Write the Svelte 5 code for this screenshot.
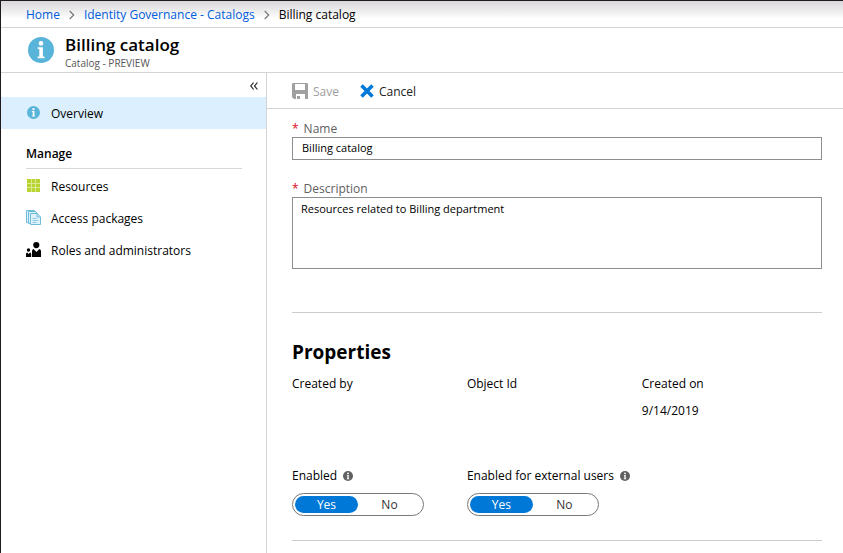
<script>
  let name = $state('Billing catalog');
  let description = $state('Resources related to Billing department');
  let toggles = $state([
    { id: 'enabled', label: 'Enabled', value: 'Yes' },
    { id: 'external', label: 'Enabled for external users', value: 'Yes' }
  ]);
  const properties = [
    { label: 'Created by', value: '' },
    { label: 'Object Id', value: '' },
    { label: 'Created on', value: '9/14/2019' }
  ];
</script>

{#snippet info(size, color)}
  <svg width={size} height={size} viewBox="0 0 26 26" aria-hidden="true">
    <circle cx="13" cy="13" r="13" fill={color} />
    <circle cx="13" cy="6.4" r="2.3" fill="#fff" />
    <path d="M9.7 10.2h5.2v9.3h1.6v1.7H9.6v-1.7h1.7v-7.6H9.7z" fill="#fff" />
  </svg>
{/snippet}

{#snippet chevron()}
  <svg class="chevron" width="6" height="10" viewBox="0 0 6 10" aria-hidden="true">
    <path d="M.7 1l4 4-4 4" fill="none" stroke="#777" stroke-width="1.2" />
  </svg>
{/snippet}

<div class="portal">
  <nav class="breadcrumb" aria-label="Breadcrumb">
    <a href="#home">Home</a>
    {@render chevron()}
    <a href="#catalogs">Identity Governance - Catalogs</a>
    {@render chevron()}
    <span>Billing catalog</span>
  </nav>

  <header>
    {@render info(26, '#59b4d9')}
    <div class="titles">
      <h1>Billing catalog</h1>
      <p>Catalog - PREVIEW</p>
    </div>
  </header>

  <div class="body">
    <aside>
      <div class="collapse">
        <button aria-label="Collapse menu">
          <svg width="8" height="8" viewBox="0 0 8 8" aria-hidden="true">
            <path d="M3.6.5L.8 4l2.8 3.5M7.4.5L4.6 4l2.8 3.5" fill="none" stroke="#222" stroke-width="1.2" />
          </svg>
        </button>
      </div>
      <a class="item active" href="#overview">
        <span class="icon">{@render info(13, '#59b4d9')}</span>
        <span class="text">Overview</span>
      </a>
      <h2>Manage</h2>
      <a class="item" href="#resources">
        <span class="icon">
          <svg width="13" height="13" viewBox="0 0 13 13" aria-hidden="true">
            <path fill="#dcea8f" d="M0 0h13v13H0z" />
            <path fill="#b8d432" d="M0 0h4v4H0zM5 0h3v4H5zM9 0h4v4H9zM0 5h4v3H0zM5 5h3v3H5zM9 5h4v3H9zM0 9h4v4H0zM5 9h3v4H5zM9 9h4v4H9z" />
          </svg>
        </span>
        <span class="text">Resources</span>
      </a>
      <a class="item" href="#packages">
        <span class="icon">
          <svg width="15" height="15" viewBox="0 0 15 15" aria-hidden="true">
            <g fill="#dff1f9" stroke="#6dbcdc">
              <path d="M.5.5h8l2 2v10H.5z" />
              <path d="M2.5 1.5h7l2 2v10h-9z" />
              <path d="M4.5 3.5h6.7l3.3 3.3v7.7h-10z" />
              <path d="M11 3.5V7h3.5" fill="none" />
              <path d="M6.5 8.5h4M6.5 10.5h6M6.5 12.500h4" fill="none" stroke-width=".7" />
            </g>
          </svg>
        </span>
        <span class="text">Access packages</span>
      </a>
      <a class="item" href="#roles">
        <span class="icon">
          <svg width="15" height="15" viewBox="0 0 15 15" aria-hidden="true">
            <circle cx="10.3" cy="3.1" r="3.1" />
            <path d="M6 15V9q0-1.600 1.600-1.900L10.500 10l2.800-2.900Q15 7.400 15 9v6z" />
            <circle cx="2.5" cy="8" r="1.7" />
            <path d="M0 15v-3q0-1.300 1.200-1.500l1.400 1.400 1.400-1.400q1.200.2 1.200 1.500v3z" />
          </svg>
        </span>
        <span class="text">Roles and administrators</span>
      </a>
    </aside>

    <main>
      <div class="toolbar">
        <button class="save" disabled>
          <svg width="16" height="16" viewBox="0 0 16 16" aria-hidden="true">
            <path fill="#a0a0a0" fill-rule="evenodd" d="M1 0h14l1 1v15h-3v-5H4v5H2l-2-2V1zM3 1v6h10V1z" />
            <path fill="#a0a0a0" d="M5 13h3v3H5z" />
          </svg>
          <span class="text">Save</span>
        </button>
        <button>
          <svg width="14" height="14" viewBox="0 0 14 14" aria-hidden="true">
            <path d="M1.5 1.500l11 11M12.500 1.500l-11 11" stroke="#0078d7" stroke-width="3.600" />
          </svg>
          <span class="text">Cancel</span>
        </button>
      </div>

      <form>
        <div class="field">
          <label for="name"><span class="required">*</span>Name</label>
          <input id="name" type="text" bind:value={name} />
        </div>
        <div class="field">
          <label for="description"><span class="required">*</span>Description</label>
          <textarea id="description" bind:value={description}></textarea>
        </div>

        <section>
          <h3>Properties</h3>
          <dl>
            {#each properties as property}
              <div>
                <dt>{property.label}</dt>
                <dd>{property.value}</dd>
              </div>
            {/each}
          </dl>
          <div class="toggles">
            {#each toggles as toggle}
              <fieldset>
                <legend>{toggle.label} {@render info(10, '#606060')}</legend>
                <div class="switch">
                  {#each ['Yes', 'No'] as option}
                    <label class:on={toggle.value === option}>
                      <input type="radio" name={toggle.id} value={option} bind:group={toggle.value} />
                      {option}
                    </label>
                  {/each}
                </div>
              </fieldset>
            {/each}
          </div>
        </section>
      </form>
    </main>
  </div>
</div>

<style>
  .portal {
    display: flex;
    flex-direction: column;
    box-sizing: border-box;
    min-height: 100vh;
    border-top: 1px solid #1f1a1e;
    border-left: 1px solid #1f1a1e;
    background: #fff;
    color: #000;
    font: 12px/18px "Segoe UI", "Open Sans", "Noto Sans", sans-serif;
  }
  h1, h2, h3, p, dl, dd, fieldset, legend {
    margin: 0;
    padding: 0;
    border: 0;
  }
  a {
    color: #015cda;
    text-decoration: none;
  }
  button {
    display: flex;
    align-items: center;
    padding: 0;
    border: 0;
    background: none;
    color: #222;
    font: inherit;
  }
  svg {
    flex: none;
  }
  .text {
    padding-top: 2px;
  }
  .breadcrumb {
    display: flex;
    align-items: center;
    box-sizing: border-box;
    height: 27px;
    padding: 2px 0 0 25px;
    border-bottom: 1px solid #d4d4d4;
    background: linear-gradient(#d9d7d9, #fff 18px);
  }
  .chevron {
    margin: 0 9px;
  }
  header {
    display: flex;
    align-items: center;
    gap: 11px;
    height: 44px;
    padding-left: 27px;
    border-bottom: 1px solid #d4d4d4;
  }
  .titles {
    padding-top: 2px;
  }
  h1 {
    font-size: 17px;
    font-weight: 600;
    line-height: 23px;
  }
  header p {
    color: #555;
    font-size: 10px;
    line-height: 14px;
  }
  .body {
    display: flex;
    flex: 1;
  }
  aside {
    flex: none;
    width: 265px;
    border-right: 1px solid #d4d4d4;
  }
  .collapse {
    display: flex;
    justify-content: flex-end;
    box-sizing: border-box;
    height: 24px;
    padding: 2px 8px 0;
  }
  .item {
    display: flex;
    align-items: center;
    height: 32px;
    padding-left: 25px;
    color: #000;
  }
  .active {
    background: #dbeffe;
  }
  .icon {
    display: flex;
    justify-content: center;
    width: 15px;
    margin-right: 10px;
    padding-bottom: 1px;
  }
  h2 {
    margin: 16px 24px 1px 25px;
    padding-bottom: 5px;
    border-bottom: 1px solid #d8d8d8;
    font-size: 12px;
    font-weight: 600;
    line-height: 18px;
  }
  main {
    flex: 1;
    min-width: 0;
  }
  .toolbar {
    display: flex;
    gap: 21px;
    height: 35px;
    padding-left: 25px;
    border-bottom: 1px solid #d4d4d4;
  }
  .toolbar button {
    gap: 5px;
  }
  .toolbar .save {
    color: #a0a0a0;
  }
  form {
    padding: 12px 21px 12px 25px;
  }
  .field {
    display: flex;
    flex-direction: column;
  }
  .field + .field {
    margin-top: 21px;
  }
  .field label {
    color: #606060;
    line-height: 16px;
  }
  .required {
    margin-right: 5px;
    color: #e00b1c;
  }
  .field input,
  .field textarea {
    box-sizing: border-box;
    width: 100%;
    height: 23px;
    margin: 0;
    padding: 0 9px 2px;
    border: 1px solid #8e8e8e;
    border-radius: 0;
    background: #fff;
    color: #000;
    font: inherit;
    font-size: 11px;
    outline: 0;
  }
  .field textarea {
    height: 72px;
    padding: 2px 8px;
    resize: none;
  }
  section {
    margin-top: 43px;
    padding: 26px 0 24px;
    border-top: 1px solid #ccc;
    border-bottom: 1px solid #ccc;
  }
  h3 {
    font-size: 19px;
    font-weight: 700;
    line-height: 26px;
  }
  dl,
  .toggles {
    display: grid;
    grid-template-columns: repeat(3, 33%);
  }
  dl {
    margin-top: 10px;
  }
  dd {
    min-height: 18px;
    margin-top: 9px;
  }
  .toggles {
    margin-top: 47px;
  }
  legend {
    display: flex;
    align-items: center;
    gap: 6px;
    white-space: nowrap;
  }
  .switch {
    display: flex;
    box-sizing: border-box;
    width: 132px;
    height: 23px;
    margin-top: 8px;
    padding: 2px;
    border: 1px solid #777;
    border-radius: 12px;
  }
  .switch label {
    flex: 1;
    border-radius: 9px;
    color: #333;
    line-height: 17px;
    text-align: center;
  }
  .switch .on {
    background: #0078d7;
    color: #fff;
  }
  .switch input {
    position: absolute;
    margin: 0;
    opacity: 0;
    pointer-events: none;
  }
</style>
